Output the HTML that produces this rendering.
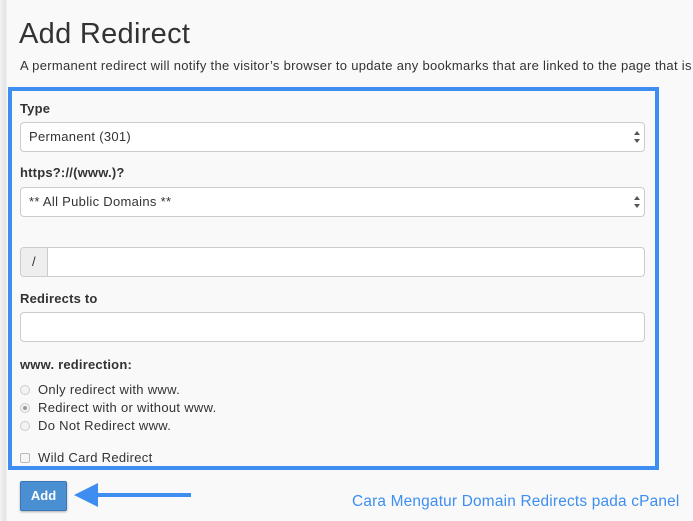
<!DOCTYPE html>
<html><head><style>
*{box-sizing:border-box;margin:0;padding:0}
body{width:693px;height:521px;overflow:hidden;background:#f9f9f9;font-family:"Liberation Sans",sans-serif;color:#333;position:relative}
.strip{position:absolute;left:0;top:0;width:7px;height:521px;background:linear-gradient(90deg,#f3f3f3,#e4e4e4 70%,#f0f0f0)}
.a{position:absolute;white-space:nowrap}
h1{position:absolute;left:19px;top:18px;font-size:29px;font-weight:normal;color:#333;letter-spacing:0.3px}
.box{position:absolute;left:8px;top:87px;width:651px;height:383px;border:4px solid #3d8ef0}
.in{position:absolute;left:20px;width:625px;height:30px;background:#fff;border:1px solid #ccc;border-radius:4px;font-size:13px;line-height:28px;padding-left:8px;letter-spacing:0.3px}
.lab{font-size:13px;font-weight:bold;color:#333;letter-spacing:0.2px}
.sel::after{content:"";position:absolute;right:4px;top:8px;border:3.5px solid transparent;border-bottom:4px solid #555;border-top:0}
.sel::before{content:"";position:absolute;right:4px;top:16px;border:3.5px solid transparent;border-top:4px solid #555;border-bottom:0}
.r{position:absolute;left:20px;width:10px;height:10px;border-radius:50%;border:1px solid #ccc;background:#f3f3f3}
.t{font-size:13px;color:#333;letter-spacing:0.3px}
</style></head><body>
<div class="strip"></div>
<h1>Add Redirect</h1>
<div class="a t" style="left:20px;top:58px;width:673px;overflow:hidden;letter-spacing:0.3px">A permanent redirect will notify the visitor’s browser to update any bookmarks that are linked to the page that is be</div>
<div class="box"></div>
<div class="a lab" style="left:20px;top:101px">Type</div>
<div class="in sel" style="top:122px">Permanent (301)</div>
<div class="a lab" style="left:20px;top:165px">https?://(www.)?</div>
<div class="in sel" style="top:187px">** All Public Domains **</div>
<div class="in" style="top:247px;padding:0"><div style="width:27px;height:28px;background:#eee;border-right:1px solid #ccc;border-radius:4px 0 0 4px;text-align:center;font-size:13px;line-height:28px">/</div></div>
<div class="a lab" style="left:20px;top:291px">Redirects to</div>
<div class="in" style="top:312px"></div>
<div class="a lab" style="left:20px;top:357px">www. redirection:</div>
<div class="r" style="top:385px"></div><div class="a t" style="left:38px;top:382px">Only redirect with www.</div>
<div class="r" style="top:403px"><div style="width:4px;height:4px;border-radius:50%;background:#999;margin:2px"></div></div><div class="a t" style="left:38px;top:400px">Redirect with or without www.</div>
<div class="r" style="top:421px"></div><div class="a t" style="left:38px;top:418px">Do Not Redirect www.</div>
<div class="a" style="left:20px;top:453px;width:10px;height:10px;border:1px solid #bbb;border-radius:2px;background:#f5f5f5"></div><div class="a t" style="left:38px;top:450px">Wild Card Redirect</div>
<div class="a" style="left:20px;top:481px;width:47px;height:30px;background:#4a8fd1;border:1px solid #3a78b5;border-radius:2px;color:#fff;font-size:13px;font-weight:bold;text-align:center;line-height:28px;box-shadow:0 1px 2px rgba(0,0,0,.3)">Add</div>
<svg class="a" style="left:74px;top:483px" width="120" height="25"><polygon points="0,12 24,0 24,24" fill="#3d8ef0"/><rect x="22" y="10" width="95" height="4" fill="#3d8ef0"/></svg>
<div class="a" style="left:352px;top:493px;font-size:15.4px;color:#3d8ef0;letter-spacing:0.2px">Cara Mengatur Domain Redirects pada cPanel</div>
</body></html>
